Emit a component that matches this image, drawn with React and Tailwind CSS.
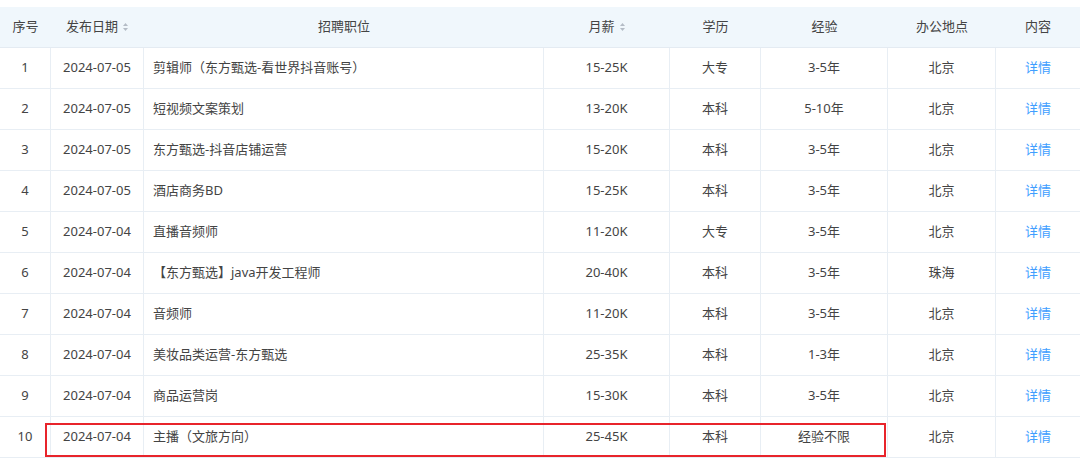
const rows = [
	['1', '2024-07-05', '剪辑师（东方甄选-看世界抖音账号）', '15-25K', '大专', '3-5年', '北京'],
	['2', '2024-07-05', '短视频文案策划', '13-20K', '本科', '5-10年', '北京'],
	['3', '2024-07-05', '东方甄选-抖音店铺运营', '15-20K', '本科', '3-5年', '北京'],
	['4', '2024-07-05', '酒店商务BD', '15-25K', '本科', '3-5年', '北京'],
	['5', '2024-07-04', '直播音频师', '11-20K', '大专', '3-5年', '北京'],
	['6', '2024-07-04', '【东方甄选】java开发工程师', '20-40K', '本科', '3-5年', '珠海'],
	['7', '2024-07-04', '音频师', '11-20K', '本科', '3-5年', '北京'],
	['8', '2024-07-04', '美妆品类运营-东方甄选', '25-35K', '本科', '1-3年', '北京'],
	['9', '2024-07-04', '商品运营岗', '15-30K', '本科', '3-5年', '北京'],
	['10', '2024-07-04', '主播（文旅方向）', '25-45K', '本科', '经验不限', '北京'],
]

const cols = 'grid grid-cols-[51px_93px_400px_126px_91px_127px_108px_84px]'

function SortIcon() {
	return (
		<svg width="7" height="10" viewBox="0 0 7 10" className="ml-1 inline-block">
			<path d="M3.5 1 L6 4 L1 4 Z" fill="#b4bcc6" />
			<path d="M3.5 9 L6 6 L1 6 Z" fill="#b4bcc6" />
		</svg>
	)
}

export default function App() {
	return (
		<div
			className="w-[1080px] h-[460px] bg-white pt-[7px] overflow-hidden text-[13px] text-[#444]"
			style={{ fontFamily: '"Noto Sans", "Noto Sans CJK SC", sans-serif' }}
		>
			<div className="relative">
				{/* 表头 */}
				<div className={`${cols} h-[41px] bg-[#f0f7fc] border-b border-[#e4ebf2] text-[#444]`}>
					<div className="flex items-center justify-center">序号</div>
					<div className="flex items-center justify-center">发布日期<SortIcon /></div>
					<div className="flex items-center justify-center">招聘职位</div>
					<div className="flex items-center justify-center">月薪<SortIcon /></div>
					<div className="flex items-center justify-center">学历</div>
					<div className="flex items-center justify-center">经验</div>
					<div className="flex items-center justify-center">办公地点</div>
					<div className="flex items-center justify-center">内容</div>
				</div>

				{rows.map((r) => (
					<div key={r[0]} className={`${cols} h-[41px] border-b border-[#e8eef4]`}>
						<div className="flex items-center justify-center border-r border-[#e8eef4]">{r[0]}</div>
						<div className="flex items-center justify-center border-r border-[#e8eef4]">{r[1]}</div>
						<div className="flex items-center px-[9px] border-r border-[#e8eef4]">{r[2]}</div>
						<div className="flex items-center justify-center border-r border-[#e8eef4]">{r[3]}</div>
						<div className="flex items-center justify-center border-r border-[#e8eef4]">{r[4]}</div>
						<div className="flex items-center justify-center border-r border-[#e8eef4]">{r[5]}</div>
						<div className="flex items-center justify-center border-r border-[#e8eef4]">{r[6]}</div>
						<div className="flex items-center justify-center text-[#409eff]">详情</div>
					</div>
				))}

				{/* 标注框 */}
				<div className="absolute left-[45px] top-[416px] w-[841px] h-[34px] border-2 border-[#e8242b]" />
			</div>
		</div>
	)
}
